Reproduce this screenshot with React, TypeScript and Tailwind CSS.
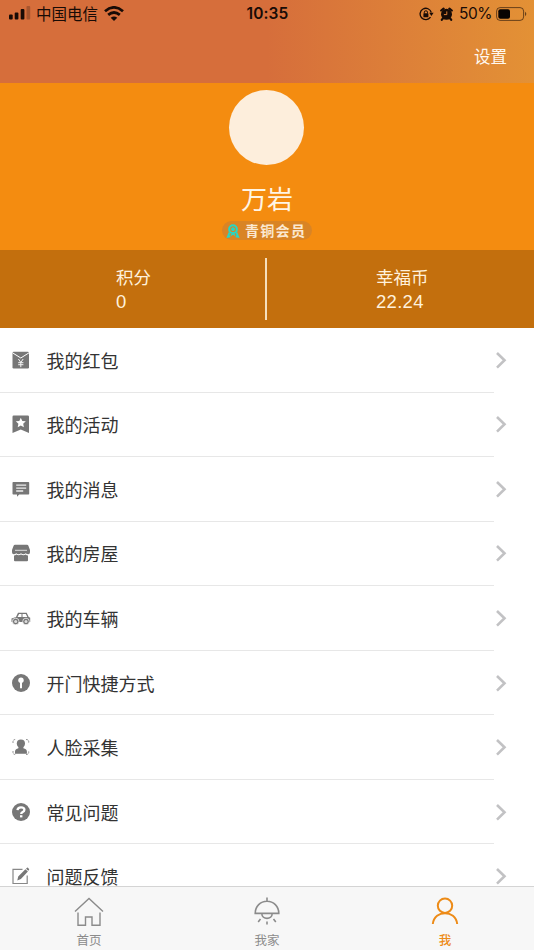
import React from 'react';

interface MenuItem {
  label: string;
  icon: React.ReactNode;
}

const RedPacketIcon = () => (
  <svg width="18" height="18" viewBox="0 0 18 18">
    <rect x=".5" y=".8" width="16.500" height="16.700" rx="1.200" fill="#777" />
    <path d="M.5 1.800 8.800 7l8.200-5.200" fill="none" stroke="#fff" strokeWidth="1" />
    <path d="m6.400 8 2.400 3.400L11.200 8M8.800 11v5.200M6.200 11.700h5.200M6.200 13.700h5.200" fill="none" stroke="#f4f4f4" strokeWidth="1" />
  </svg>
);

const ActivityIcon = () => (
  <svg width="18" height="18" viewBox="0 0 18 18">
    <path d="M1.700 .5h14.100q1.200 0 1.200 1.200v16.300l-8.200-3.500L.5 18V1.700Q.5 .5 1.700 .5Z" fill="#777" />
    <path d="m8.800 2.700 1.500 3.200 3.500.4-2.600 2.400.7 3.500-3.100-1.700-3.100 1.700.7-3.500-2.600-2.400 3.500-.4Z" fill="#fff" />
  </svg>
);

const MessageIcon = () => (
  <svg width="18" height="18" viewBox="0 0 18 18">
    <path d="M1.200 2h15.300q.7 0 .7.700v11q0 .7-.7.700H7.200L5 16.700v-2.300H1.200q-.7 0-.7-.7v-11Q.5 2 1.200 2Z" fill="#777" />
    <path d="M4.200 5.100h10M4.200 8.100h10M4.200 11h7" stroke="#eee" strokeWidth="1.300" />
  </svg>
);

const HouseIcon = () => (
  <svg width="20" height="18" viewBox="0 0 20 18">
    <path d="M4 .8h12q1 0 1.400 1L19 6v2.200q0 1.800-1.800 2-1.500 0-2.400-1-2.400 2-4.800 0-2.400 2-4.800 0-1 1-2.400 1Q1 10 1 8.200V6l1.600-4.200Q3 .8 4 .8Z" fill="#777" />
    <path d="M3 11.500q1.300 0 2.300-1 2.300 1.600 4.700 0 2.400 1.600 4.700 0 1 1 2.300 1v4.700q0 1-1 1H4q-1 0-1-1Z" fill="#777" />
    <path d="M4 6.300h12" stroke="#ddd" strokeWidth="1" />
  </svg>
);

const CarIcon = () => (
  <svg width="20" height="16" viewBox="0 0 20 16">
    <path d="M.5 12V8.500L5 7l2-4.200h8.700L17.700 7l1.500.7V12Z" fill="#777" />
    <path d="M6.500 7 8.100 4h2.400v3ZM11.500 4h3.300l1.500 3h-4.800Z" fill="#fff" />
    <circle cx="4.700" cy="11.500" r="3.300" fill="#777" stroke="#fff" strokeWidth=".7" />
    <circle cx="4.700" cy="11.500" r="1.500" fill="#ddd" />
    <circle cx="15" cy="11.500" r="3.300" fill="#777" stroke="#fff" strokeWidth=".7" />
    <circle cx="15" cy="11.500" r="1.500" fill="#ddd" />
  </svg>
);

const DoorKeyIcon = () => (
  <svg width="18" height="18" viewBox="0 0 18 18">
    <circle cx="9" cy="9" r="9" fill="#777" />
    <circle cx="9" cy="6.300" r="2.700" fill="#fff" />
    <path d="M8 7h2v7.200H8Z" fill="#fff" />
  </svg>
);

const FaceIcon = () => (
  <svg width="18" height="18" viewBox="0 0 18 18">
    <circle cx="8.900" cy="5.500" r="4.100" fill="#777" />
    <path d="M6.400 8h5v2.200l2 .8q1.500.7 1.500 2.500v2.300H3v-2.300q0-1.800 1.500-2.500l1.900-.8Z" fill="#777" />
    <path d="M1 5V3.500Q1 1.500 3.500 1.500M14 1.500q2.700 0 2.700 2V5M1 13v1.500q0 2 2.500 2M14 16.500q2.700 0 2.700-2V13" fill="none" stroke="#888" strokeWidth=".9" strokeDasharray="2 .8" />
  </svg>
);

const QuestionIcon = () => (
  <svg width="18" height="18" viewBox="0 0 18 18">
    <circle cx="9" cy="9" r="9" fill="#777" />
    <path d="M5.500 7.200Q5.700 4.300 9 4.300q3.400 0 3.400 2.500 0 1.400-1.700 2.300-1.500.8-1.500 2" fill="none" stroke="#fff" strokeWidth="2.300" />
    <path d="M8 12.200h2.400v2.200H8Z" fill="#fff" />
  </svg>
);

const FeedbackIcon = () => (
  <svg width="18" height="18" viewBox="0 0 18 18">
    <path d="M10.500 2.300H1v14.200h14.200V8.500" fill="none" stroke="#888" strokeWidth="1.200" />
    <path d="m5.300 13.500.9-4 7.200-7.300 2.500 2.400-7 7.500ZM14 1.700l1-1q.5-.4 1 0l1 1.200q.4.500 0 1l-.7.900Z" fill="#777" />
  </svg>
);

const menuItems: MenuItem[] = [
  { label: '我的红包', icon: <RedPacketIcon /> },
  { label: '我的活动', icon: <ActivityIcon /> },
  { label: '我的消息', icon: <MessageIcon /> },
  { label: '我的房屋', icon: <HouseIcon /> },
  { label: '我的车辆', icon: <CarIcon /> },
  { label: '开门快捷方式', icon: <DoorKeyIcon /> },
  { label: '人脸采集', icon: <FaceIcon /> },
  { label: '常见问题', icon: <QuestionIcon /> },
  { label: '问题反馈', icon: <FeedbackIcon /> },
];

const StatusBar = () => (
  <div className="grid h-7 grid-cols-[1fr_auto_1fr] items-center pr-[7px] pl-2 text-[#180b06]">
    <div className="-mt-[2px] flex items-center">
      <svg width="23" height="14" viewBox="0 0 23 14" fill="currentColor">
        <rect x="1" y="8.500" width="3.700" height="5" rx="1" />
        <rect x="6.700" y="6.500" width="3.700" height="7" rx="1" />
        <rect x="12.700" y="3" width="3.700" height="10.500" rx="1" />
        <rect x="18.500" y="0" width="3.700" height="13.500" rx="1" opacity=".25" />
      </svg>
      <span className="ml-[5px] text-[15.500px] leading-7">中国电信</span>
      <svg className="ml-[6px]" width="20" height="15" viewBox="0 0 20 15" fill="none" stroke="currentColor" strokeWidth="2.800">
        <path d="M1 5.200q9-7.600 18 0M4.200 8.900q5.800-4.800 11.600 0" />
        <path d="M6.700 11.800q3.300-2.600 6.600 0L10 15Z" fill="currentColor" stroke="none" />
      </svg>
    </div>
    <span className="font-['Inter','Liberation_Sans',sans-serif] text-[15.500px] font-semibold tracking-[.1px]">10:35</span>
    <div className="flex items-center justify-end">
      <svg width="15" height="14" viewBox="0 0 15 14">
        <path d="M11.500 10.200A5.700 5.700 0 1 1 12.300 5.500" fill="none" stroke="currentColor" strokeWidth="1.300" />
        <path d="M10.200 5.800h4.400l-2.200 3.200Z" fill="currentColor" />
        <rect x="4.400" y="6.300" width="5" height="4" rx=".6" fill="currentColor" />
        <path d="M5.300 6.500V5.200q0-1.400 1.600-1.400t1.600 1.400v1.300" fill="none" stroke="currentColor" />
      </svg>
      <svg className="ml-[6px]" width="13" height="14" viewBox="0 0 13 14">
        <circle cx="6.500" cy="7.300" r="5.500" fill="currentColor" />
        <path d="M1.200 3.500 3.600 1.600M11.800 3.500 9.400 1.600M2.800 11.500l-1 1.300M10.200 11.500l1 1.300" stroke="currentColor" strokeWidth="2.200" strokeLinecap="round" />
        <path d="M6.800 4.400v3.200H3.900" fill="none" stroke="#dd8038" />
      </svg>
      <span className="ml-[6px] font-['Inter','Liberation_Sans',sans-serif] text-[15.500px] tracking-[-.5px]">50%</span>
      <svg className="ml-1" width="31" height="14" viewBox="0 0 31 14">
        <rect x=".6" y=".6" width="27" height="12.800" rx="3.500" fill="none" stroke="currentColor" strokeWidth="1" opacity=".6" />
        <rect x="2.300" y="2.200" width="11.700" height="9.600" rx="2" fill="#090402" />
        <path d="M29 4.800q2.600 2.200 0 4.400Z" fill="currentColor" opacity=".6" />
      </svg>
    </div>
  </div>
);

const ProfileHeader = () => (
  <section className="flex h-[167px] flex-col items-center bg-[#f48c10] pt-[7px] text-[#fff5e5]">
    <div className="mr-px size-[75px] shrink-0 rounded-full bg-[#fdeedc]" />
    <h1 className="mt-[14px] text-[26px] leading-[38px] font-normal">万岩</h1>
    <div className="mt-[4px] flex h-[19px] w-[90px] shrink-0 items-center rounded-full bg-[#d98425] pl-[4px]">
      <svg width="14" height="14" viewBox="0 0 14 14" fill="none" stroke="#28d6c4">
        <circle cx="7" cy="5.200" r="3.900" strokeWidth="2" />
        <circle cx="7" cy="5.200" r="1.500" fill="#28d6c4" />
        <path d="m3.500 8.500-1.600 4.200 2.400-.4M10.500 8.500l1.600 4.200-2.400-.4" strokeWidth="1.900" />
        <path d="M4.800 11.500 7 9.700l2.200 1.800" strokeWidth="1.200" />
      </svg>
      <span className="ml-[5px] text-[14px] leading-[19px] font-bold tracking-[1.300px] whitespace-nowrap text-[#fbe9d2]">青铜会员</span>
    </div>
  </section>
);

const Stats = () => (
  <section className="grid h-[78px] grid-cols-2 bg-[#c36f0d] py-2 text-[#fff1dc]">
    <div className="flex flex-col border-r-2 border-[#f6dfbc] pt-[6px] pl-[116px]">
      <span className="text-[17.500px] leading-[25px]">积分</span>
      <span className="pt-px font-['Liberation_Sans',sans-serif] text-[18.500px] leading-[23px]">0</span>
    </div>
    <div className="flex flex-col pt-[6px] pl-[109px]">
      <span className="text-[17.500px] leading-[25px]">幸福币</span>
      <span className="pt-px font-['Liberation_Sans',sans-serif] text-[18.500px] leading-[23px] tracking-[.3px]">22.24</span>
    </div>
  </section>
);

const MenuRow: React.FC<{ item: MenuItem }> = ({ item }) => (
  <li className="h-[64.560px] shrink-0">
    <div className="mr-10 flex h-full items-center border-b border-[#e7e7e7]">
      <span className="ml-[10px] flex w-[21px] justify-center">{item.icon}</span>
      <span className="ml-[15.500px] text-[18px] leading-7 text-[#333]">{item.label}</span>
      <svg className="-mr-[13px] ml-auto" width="12" height="18" viewBox="0 0 12 18" fill="none" stroke="#c2c2c4" strokeWidth="2.600">
        <path d="m2 2 7.500 7.300L2 16.600" />
      </svg>
    </div>
  </li>
);

const TabBar = () => (
  <nav className="grid h-16 shrink-0 grid-cols-3 border-t border-[#d4d4d4] bg-[#f7f7f7] pt-[9px] text-[12.500px] text-[#8b8b8b]">
    <div className="flex flex-col items-center">
      <svg width="30" height="32" viewBox="0 0 30 32" fill="none" stroke="currentColor" strokeWidth="1.400">
        <path d="M1 15.500 15 2.500l14 13M4 16.500v12.800h7.500V21h6.500v8.300h8V16.500" />
      </svg>
      <span className="mt-[3px] leading-[18px]">首页</span>
    </div>
    <div className="flex flex-col items-center">
      <svg width="30" height="32" viewBox="0 0 30 32" fill="none" stroke="currentColor" strokeWidth="1.600">
        <path d="M15 1.500v4M3.200 17.400C3.200 10 8.500 5.300 15 5.300s11.800 4.700 11.800 12.100ZM9.800 17.500c0 6.500 10.400 6.500 10.400 0M8.500 23l-2.300 3M15 25.500v3M21.500 23l2.300 3" />
      </svg>
      <span className="mt-[3px] leading-[18px]">我家</span>
    </div>
    <div className="flex flex-col items-center text-[#ed8b17]">
      <svg width="30" height="32" viewBox="0 0 30 32" fill="none" stroke="currentColor" strokeWidth="2">
        <circle cx="15" cy="9.700" r="7.200" />
        <path d="M2.800 28C4.500 13.500 25.500 13.500 27.200 28" />
      </svg>
      <span className="mt-[3px] leading-[18px] font-medium">我</span>
    </div>
  </nav>
);

export default function App() {
  return (
    <div className="flex h-[950px] w-[534px] flex-col overflow-hidden bg-white font-['Noto_Sans_CJK_SC',sans-serif]">
      <header className="h-[83px] shrink-0 bg-linear-to-r from-[#d66e3b] from-50% to-[#e39135]">
        <StatusBar />
        <div className="flex justify-end pt-4 pr-[27px] text-[16.500px] leading-6 text-[#fff8ef]">设置</div>
      </header>
      <main className="min-h-0 flex-1 overflow-hidden">
        <ProfileHeader />
        <Stats />
        <ul>
          {menuItems.map((item) => (
            <MenuRow key={item.label} item={item} />
          ))}
        </ul>
      </main>
      <TabBar />
    </div>
  );
}
